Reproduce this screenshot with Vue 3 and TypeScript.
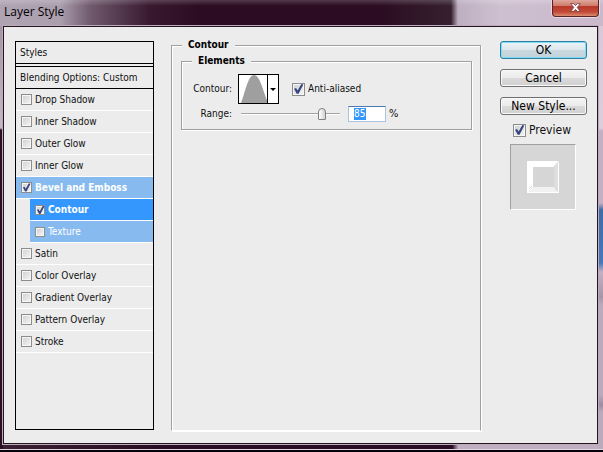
<script setup lang="ts">
import { ref } from 'vue'

interface Effect {
  name: string
  on: boolean
  kind?: 'parent' | 'current' | 'child'
}

const effects = ref<Effect[]>([
  { name: 'Drop Shadow', on: false },
  { name: 'Inner Shadow', on: false },
  { name: 'Outer Glow', on: false },
  { name: 'Inner Glow', on: false },
  { name: 'Bevel and Emboss', on: true, kind: 'parent' },
  { name: 'Contour', on: true, kind: 'current' },
  { name: 'Texture', on: false, kind: 'child' },
  { name: 'Satin', on: false },
  { name: 'Color Overlay', on: false },
  { name: 'Gradient Overlay', on: false },
  { name: 'Pattern Overlay', on: false },
  { name: 'Stroke', on: false },
])

const antiAliased = ref(true)
const preview = ref(true)
const range = ref(85)
</script>

<template>
  <div class="window">
    <header class="titlebar">
      <h1>Layer Style</h1>
      <button class="close" type="button" aria-label="Close">
        <svg width="11" height="9" viewBox="0 0 11 9" aria-hidden="true">
          <path d="M0.7 0.7H3.8L5.5 2.6L7.2 0.7H10.3L7.2 4.5L10.3 8.3H7.2L5.5 6.4L3.8 8.3H0.7L3.8 4.5Z" fill="#fff" stroke="#6b3a3c" stroke-width="0.8" />
        </svg>
      </button>
    </header>

    <main class="client">
      <nav class="styles">
        <div class="head">Styles</div>
        <div class="head options">Blending Options: Custom</div>
        <ul>
          <li v-for="e in effects" :key="e.name" :class="e.kind">
            <label><input v-model="e.on" type="checkbox" />{{ e.name }}</label>
          </li>
        </ul>
      </nav>

      <fieldset class="outer">
        <legend>Contour</legend>
        <fieldset class="inner">
          <legend>Elements</legend>
          <div class="row tall">
            <span class="caption">Contour:</span>
            <button class="curve" type="button" aria-label="Contour">
              <svg width="39" height="28" viewBox="0 0 39 28" aria-hidden="true">
                <rect width="28" height="28" fill="#fff" />
                <path d="M2 28C6 18 9 0 15 0C21 0 24 16 28 25V28Z" fill="#9f9f9f" />
                <path d="M28.500 0V28" stroke="#000" />
                <path d="M31 13H37L34 16Z" fill="#000" />
              </svg>
            </button>
            <label class="tick"><input v-model="antiAliased" class="large" type="checkbox" />Anti-aliased</label>
          </div>
          <div class="row">
            <label class="caption" for="range">Range:</label>
            <input id="range" v-model.number="range" class="slider" type="range" min="0" max="100" />
            <label class="percent"><span class="value"><input v-model="range" type="text" aria-label="Range percent" /></span>%</label>
          </div>
        </fieldset>
      </fieldset>

      <aside class="actions">
        <button class="push default" type="button">OK</button>
        <button class="push" type="button">Cancel</button>
        <button class="push" type="button">New Style...</button>
        <label class="tick preview"><input v-model="preview" class="large" type="checkbox" />Preview</label>
        <div class="swatch">
          <svg width="32" height="32" viewBox="0 0 32 32" aria-hidden="true">
            <rect x="0.500" y="0.500" width="31" height="31" rx="1" fill="#e6e6e6" stroke="#fff" />
            <path d="M0 1Q0 0 1 0H31L26 6H6V26L1 31L0 30Z" fill="#fff" />
            <path d="M1 31L6 26H26L31 31Z" fill="#f1f1f1" />
            <path d="M27 6L31 2V30L27 26Z" fill="#dedede" />
            <rect x="6" y="6" width="21" height="20" fill="#d6d6d6" />
            <path d="M2 28L5 25M28 27L31 30" stroke="#d2d2d2" />
            <path d="M0 31.500H32" stroke="#fff" />
          </svg>
        </div>
      </aside>
    </main>
  </div>
</template>

<style>
body {
  background: #0d0309;
}
</style>

<style scoped>
* {
  box-sizing: border-box;
}

.window {
  display: flex;
  flex-direction: column;
  min-height: 100vh;
  padding: 0 5px 8px 3px;
  font: 10px/12px "DejaVu Sans Condensed", "DejaVu Sans", sans-serif;
  color: #111;
  background:
    linear-gradient(#08020a, #08020a) bottom / 100% 2px no-repeat,
    linear-gradient(#e3d8e2, #e3d8e2) 0 calc(100% - 2px) / 100% 1px no-repeat,
    linear-gradient(#d6c8d6 0, #dccfdc 128px, #c3b0c4 131px, #c3b0c4 203px, #3d6cab 210px, #4479ba 263px, #c3b0c4 272px, #a695aa 297px, #bba9be 305px, #bba9be 395px, #9c8ca1 405px, #bba9be 412px) right / 4px 100% no-repeat,
    linear-gradient(#9a8c9a 0, #c5bac4 128px, #2a1023 130px, #2a1023) left / 3px 100% no-repeat,
    linear-gradient(90deg, #3b2034, #2a0d22 25%, #2a0d22 75%, #bfafc1 76%, #bfafc1);
}

.titlebar {
  display: flex;
  justify-content: space-between;
  align-items: flex-start;
  height: 26px;
  margin: 0 -5px 0 -3px;
  padding: 0 4px;
  background:
    linear-gradient(#ffffff30, #ffffff00 6px),
    linear-gradient(90deg, #b0a4b3 0, #ab9eae 60px, #705a6e 90px, #38182f 150px, #2b0c22 200px, #2b0c22 380px, #36202f 451px, #bdaec0 458px, #cfc0d1 500px, #c9b9cb);
}

h1 {
  margin: 4px 0 0;
  font: 12px/16px "Open Sans", "Noto Sans", sans-serif;
  color: #000;
}

.close {
  display: flex;
  justify-content: center;
  width: 47px;
  height: 17px;
  padding: 3px 0 0;
  border: 1px solid #5a2229;
  border-top: 0;
  border-radius: 0 0 4px 4px;
  background: linear-gradient(#dfa79a, #cf7c6c 35%, #b8382a 40%, #c14a37 75%, #dc8b70);
  box-shadow: 0 0 0 1px #e8dbe5;
}

.client {
  flex: 1;
  display: flex;
  align-items: stretch;
  padding: 14px 10px 12px 11px;
  border: 1px solid #271423;
  background: #ececec;
  box-shadow: 0 0 0 1px #b9adb9;
}

.styles {
  width: 139px;
  margin-bottom: 1px;
  border: 1px solid #000;
}

.head {
  height: 22px;
  padding: 5px 4px;
  border-bottom: 1px solid #000;
}

.options {
  height: 23px;
  margin-top: 2px;
  border-top: 1px solid #000;
}

ul {
  margin: 0;
  padding: 0;
  list-style: none;
}

li {
  display: flex;
  height: 22px;
  padding-left: 5px;
  border-bottom: 1px solid #fff;
}

li label,
.tick {
  display: flex;
  align-items: center;
  gap: 3px;
}

li.parent,
li.child {
  background: #87baee;
  color: #fff;
}

li.current {
  background: #3397fe;
  color: #fff;
}

li.parent,
li.current {
  font-weight: bold;
}

li.current,
li.child {
  margin-left: 14px;
}

input[type="checkbox"] {
  display: grid;
  place-items: center;
  appearance: none;
  flex: none;
  width: 11px;
  height: 11px;
  margin: 0;
  border: 1px solid #8c8c8c;
  background: linear-gradient(135deg, #cfcfcf, #f5f5f5);
  box-shadow: inset 0 0 0 1px #f6f6f6;
}

input[type="checkbox"]:checked::before {
  content: "";
  width: 9px;
  height: 9px;
  background: #36457f;
  clip-path: polygon(10% 48%, 28% 42%, 42% 64%, 76% 4%, 94% 8%, 50% 94%, 34% 94%);
}

li.current input[type="checkbox"],
li.child input[type="checkbox"] {
  width: 10px;
  height: 10px;
}

input[type="checkbox"].large {
  width: 13px;
  height: 13px;
}

input[type="checkbox"].large:checked::before {
  width: 11px;
  height: 11px;
}

fieldset {
  min-width: 0;
  margin: 0;
  border: 1px solid #a0a0a0;
  box-shadow: 1px 1px 0 #fff, inset 1px 1px 0 #fff;
}

legend {
  padding: 0 6px;
  font-weight: bold;
  color: #000;
  background: #ececec;
}

.outer {
  flex: 1;
  margin: -2px 19px 0 17px;
  padding: 4px 8px 8px 9px;
  border-bottom-color: #fff;
}

.inner {
  padding: 7px 9px 5px 8px;
}

.outer > legend {
  margin-left: 1px;
}

.inner > legend {
  margin-left: 2px;
}

.row {
  display: flex;
  align-items: center;
  height: 20px;
}

.row.tall {
  height: 30px;
}

.caption {
  width: 42px;
  margin-right: 6px;
  text-align: right;
}

.curve {
  margin-right: 13px;
  padding: 0;
  border: 1px solid #000;
  background: #fff;
  line-height: 0;
}

.slider {
  appearance: none;
  width: 99px;
  height: 14px;
  margin: 0 8px 0 3px;
  background: linear-gradient(#a3a3a3, #a3a3a3) 0 6px / 100% 1px no-repeat, linear-gradient(#fff, #fff) 0 7px / 100% 1px no-repeat;
}

.slider::-webkit-slider-thumb {
  appearance: none;
  width: 8px;
  height: 12px;
  border: 1px solid #7f7f7f;
  border-radius: 4px 4px 1px 1px;
  background: linear-gradient(90deg, #fff, #d2d2d2);
}

.percent {
  display: flex;
  align-items: center;
  gap: 3px;
  font-size: 11px;
}

.value {
  display: flex;
  width: 38px;
  height: 16px;
  padding: 1px 5px;
  border: 1px solid #a9c4de;
  border-top-color: #4a78b0;
  background: #fff;
  font-size: 10px;
}

.value input {
  width: 12px;
  height: 12px;
  padding: 0;
  border: 0;
  font: inherit;
  color: #fff;
  background: #3397fe;
}

.actions {
  display: flex;
  flex-direction: column;
  width: 87px;
  font-size: 12px;
  line-height: 14px;
}

.push {
  height: 18px;
  margin-bottom: 10px;
  padding: 0;
  border: 1px solid #707070;
  border-radius: 3px;
  font: inherit;
  color: #000;
  background: linear-gradient(#f4f4f4, #ebebeb 50%, #dadada 50%, #d0d0d0);
  box-shadow: inset 0 0 0 1px #fafafa;
}

.push.default {
  border-color: #2d7f9f;
  background: linear-gradient(#eef4f7, #dbe6eb 50%, #cad9df 50%, #c3d2d9);
  box-shadow: inset 0 0 0 1px #7fdcf8;
}

.preview {
  height: 16px;
  margin: -3px 0 6px 13px;
}

.swatch {
  display: grid;
  place-items: center;
  width: 66px;
  height: 66px;
  margin-left: 10px;
  border: 1px solid #a0a0a0;
  border-right-color: #fff;
  border-bottom-color: #fff;
  background: #d6d6d6;
}
</style>
